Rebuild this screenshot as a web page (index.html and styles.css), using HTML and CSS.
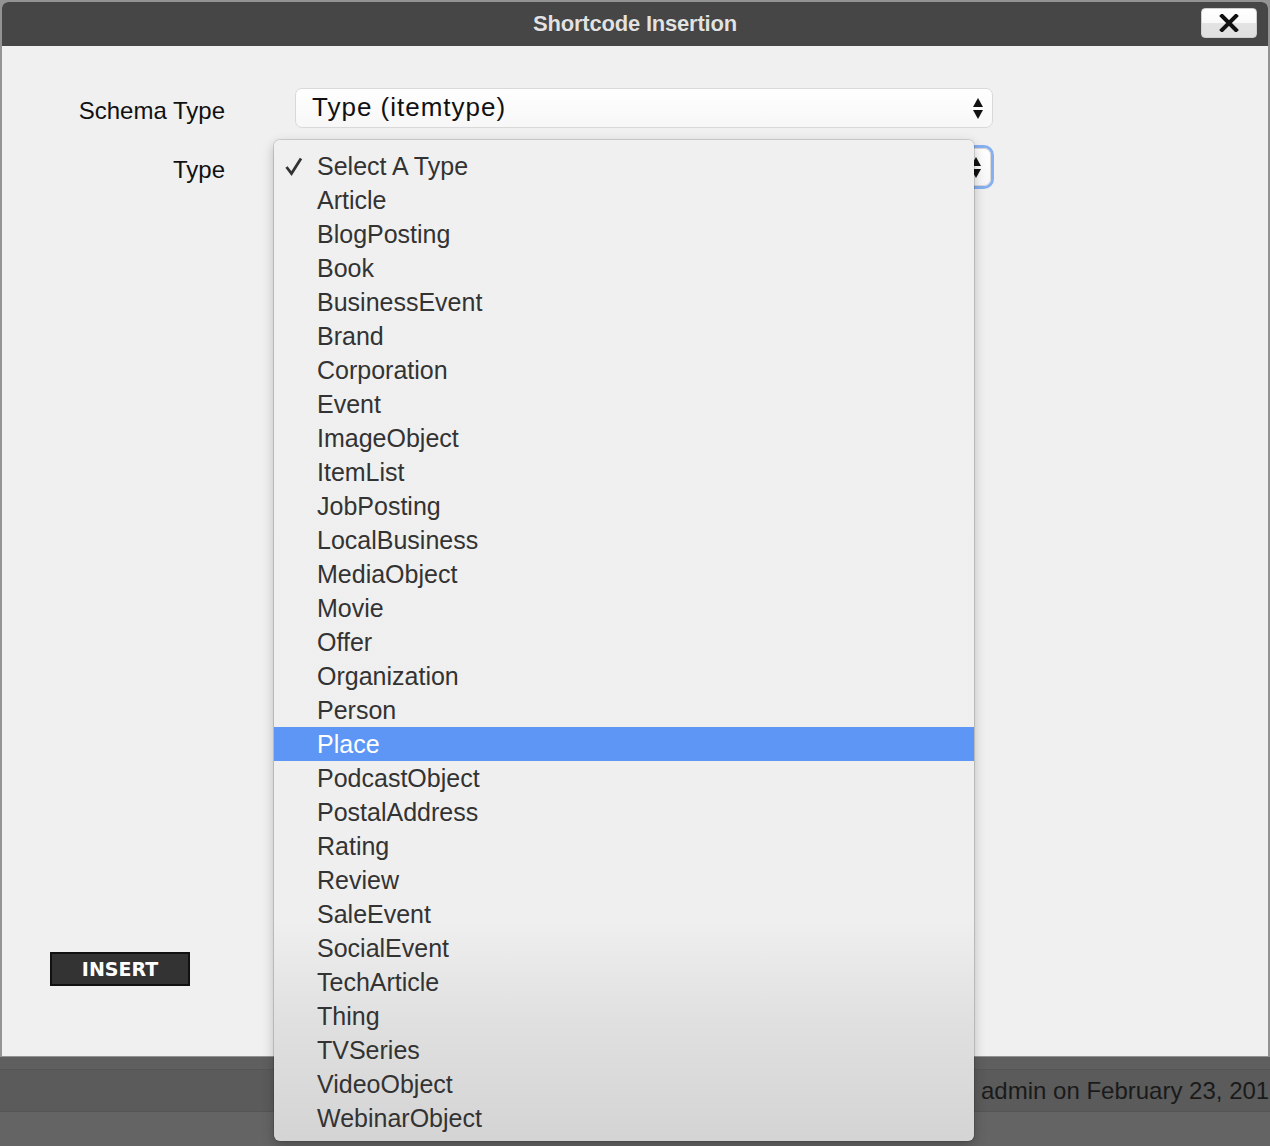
FILE: index.html
```html
<!DOCTYPE html>
<html>
<head>
<meta charset="utf-8">
<title>Shortcode Insertion</title>
<link rel="stylesheet" href="styles.css">
</head>
<body>
<div class="frame">
  <div class="modal">
    <div class="titlebar">
      <span class="title">Shortcode Insertion</span>
      <button class="close" aria-label="Close">
        <svg width="20" height="18" viewBox="0 0 20 18"><path d="M3 2 L17 16 M17 2 L3 16" stroke="#111" stroke-width="4" stroke-linecap="square" fill="none"/></svg>
      </button>
    </div>
    <div class="body">
      <div class="form">
        <label class="label">Schema Type</label>
        <div class="select">
          <span class="select-text">Type (itemtype)</span>
          <span class="arrows"><i class="up"></i><i class="down"></i></span>
        </div>
        <label class="label">Type</label>
        <div class="select focused">
          <span class="select-text"></span>
          <span class="arrows"><i class="up"></i><i class="down"></i></span>
        </div>
      </div>
      <button class="insert">INSERT</button>
    </div>
  </div>
</div>
<div class="footer">
  <div class="band top"></div>
  <div class="band middle"><span class="meta">admin on February 23, 2015</span></div>
  <div class="band bottom"></div>
</div>

<ul class="menu">
  <li class="item checked"><svg class="check" width="20" height="20" viewBox="0 0 20 20"><path d="M2.5 11 L7.5 17.5 L17 2.5" stroke="#333" stroke-width="2.8" fill="none" stroke-linejoin="miter"/></svg>Select A Type</li>
  <li class="item">Article</li>
  <li class="item">BlogPosting</li>
  <li class="item">Book</li>
  <li class="item">BusinessEvent</li>
  <li class="item">Brand</li>
  <li class="item">Corporation</li>
  <li class="item">Event</li>
  <li class="item">ImageObject</li>
  <li class="item">ItemList</li>
  <li class="item">JobPosting</li>
  <li class="item">LocalBusiness</li>
  <li class="item">MediaObject</li>
  <li class="item">Movie</li>
  <li class="item">Offer</li>
  <li class="item">Organization</li>
  <li class="item">Person</li>
  <li class="item active">Place</li>
  <li class="item">PodcastObject</li>
  <li class="item">PostalAddress</li>
  <li class="item">Rating</li>
  <li class="item">Review</li>
  <li class="item">SaleEvent</li>
  <li class="item">SocialEvent</li>
  <li class="item">TechArticle</li>
  <li class="item">Thing</li>
  <li class="item">TVSeries</li>
  <li class="item">VideoObject</li>
  <li class="item">WebinarObject</li>
</ul>
</body>
</html>
```
FILE: styles.css
```css
* { box-sizing: border-box; }
html, body { margin: 0; padding: 0; }
body {
  width: 1270px;
  height: 1146px;
  overflow: hidden;
  background: #646464;
  font-family: "Liberation Sans", Arial, sans-serif;
  position: relative;
}
.frame {
  background: #939393;
  padding: 2px 2px 1px 2px;
}
.modal {
  height: 1054px;
  background: #f0f0f0;
  border-radius: 6px 6px 0 0;
  overflow: hidden;
  display: flex;
  flex-direction: column;
}
.titlebar {
  height: 44px;
  background: #464646;
  display: flex;
  align-items: center;
  justify-content: center;
  position: relative;
}
.title {
  color: #e2e2e2;
  font-weight: bold;
  font-size: 22px;
  letter-spacing: -0.2px;
  text-shadow: 0 0 1px rgba(0,0,0,0.4);
}
.close {
  position: absolute;
  right: 11px;
  top: 6px;
  width: 56px;
  height: 30px;
  border: 1px solid #cfcfcf;
  border-radius: 4px;
  background: linear-gradient(to bottom, #ffffff 0%, #fafafa 48%, #e3e3e3 52%, #e0e0e0 100%);
  display: flex;
  align-items: center;
  justify-content: center;
  padding: 0;
}
.body {
  flex: 1;
  display: flex;
  flex-direction: column;
  align-items: flex-start;
  padding-top: 42px;
}
.form {
  display: grid;
  grid-template-columns: 223px 698px;
  column-gap: 70px;
  row-gap: 19px;
  align-items: center;
}
.label {
  text-align: right;
  font-size: 24px;
  color: #111;
  padding-top: 5px;
}
.select {
  height: 40px;
  border: 1px solid #d9d9d9;
  border-radius: 7px;
  background: linear-gradient(to bottom, #ffffff, #f7f7f7);
  display: flex;
  align-items: center;
  justify-content: space-between;
  padding: 0 9px 0 16px;
}
.select.focused {
  box-shadow: 0 0 0 3px rgba(100, 155, 240, 0.75);
  height: 38px;
  margin: 1px 2px 1px 0;
}
.select-text {
  font-size: 26px;
  color: #111;
  letter-spacing: 1px;
  padding-bottom: 2px;
}
.arrows {
  display: flex;
  flex-direction: column;
  gap: 3px;
}
.arrows i {
  display: block;
  width: 0;
  height: 0;
  border-left: 5px solid transparent;
  border-right: 5px solid transparent;
}
.arrows .up { border-bottom: 9px solid #111; }
.arrows .down { border-top: 9px solid #111; }
.insert {
  margin-top: 765px;
  margin-left: 48px;
  width: 140px;
  height: 34px;
  background: #333;
  border: 2px solid #111;
  color: #fff;
  font-family: "DejaVu Sans", Verdana, sans-serif;
  font-weight: bold;
  font-size: 19px;
  padding: 0;
  letter-spacing: 0;
}
.footer {
  height: 89px;
  display: flex;
  flex-direction: column;
}
.band.top { height: 13px; background: #5f5f5f; border-bottom: 1px solid #555; }
.band.middle {
  height: 42px;
  background: #5b5b5b;
  border-bottom: 1px solid #555;
  display: flex;
  align-items: center;
  padding-left: 981px;
  white-space: nowrap;
  overflow: hidden;
}
.band.bottom { flex: 1; background: #646464; }
.meta {
  font-size: 24px;
  color: #1a1a1a;
}
.menu {
  position: absolute;
  left: 274px;
  top: 140px;
  width: 700px;
  height: 1001px;
  margin: 0;
  padding: 9px 0 0 0;
  list-style: none;
  border-radius: 6px;
  background: linear-gradient(to bottom, #f0f0f0 0%, #efefef 78%, #e0e0e0 88%, #d4d4d4 100%);
  box-shadow: 0 0 0 1px rgba(0,0,0,0.12), 0 4px 12px rgba(0,0,0,0.25);
}
.item {
  height: 34px;
  line-height: 34px;
  padding-left: 43px;
  font-size: 25px;
  color: #333;
  position: relative;
  letter-spacing: 0;
}
.item.active {
  background: #5e96f6;
  color: #fff;
}
.check {
  position: absolute;
  left: 10px;
  top: 7px;
}
```
